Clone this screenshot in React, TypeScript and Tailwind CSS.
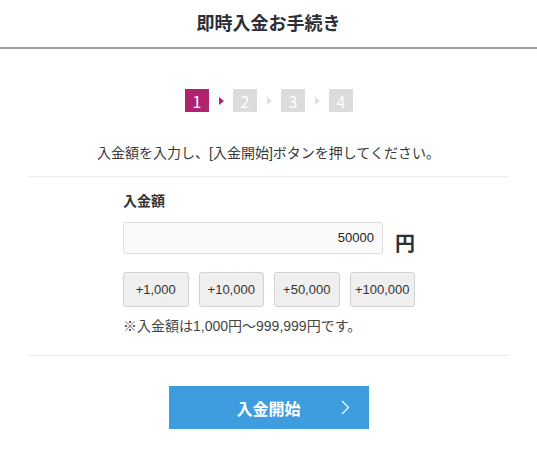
import React from "react";

const font = { fontFamily: '"Noto Sans CJK JP", "Liberation Sans", sans-serif' };
const mixed = { fontFamily: '"Liberation Sans", "Noto Sans CJK JP", sans-serif' };

const steps = [1, 2, 3, 4];
const amounts = ["+1,000", "+10,000", "+50,000", "+100,000"];

const Step = ({ n, active }: { n: number; active: boolean }) => (
  <div
    className={`flex h-[23px] w-[24px] items-center justify-center text-[16px] leading-none text-white ${
      active ? "bg-[#b0246f]" : "bg-[#dcdcdc]"
    }`}
  >
    {n}
  </div>
);

const Arrow = ({ active }: { active: boolean }) => (
  <div className="flex w-[24px] justify-center">
    <div
      className={`h-0 w-0 border-y-[4.5px] border-l-[5px] border-y-transparent ${
        active ? "border-l-[#b0246f]" : "border-l-[#e0e0e0]"
      }`}
    />
  </div>
);

export default function App() {
  return (
    <div className="min-h-[452px] w-[537px] bg-white text-[#333]" style={font}>
      {/* header */}
      <div className="flex h-[49px] items-center justify-center border-b-2 border-[#9c9c9c] pb-[2px]">
        <h1 className="text-[18px] font-bold text-[#2b2f36]">即時入金お手続き</h1>
      </div>

      {/* steps */}
      <div className="mt-[40px] flex items-center justify-center pl-[1px]">
        {steps.map((s, i) => (
          <React.Fragment key={s}>
            {i > 0 && <Arrow active={i === 1} />}
            <Step n={s} active={i === 0} />
          </React.Fragment>
        ))}
      </div>

      <p className="mt-[31px] text-center text-[14px] leading-[20px] text-[#3a3a3a]" style={mixed}>
        入金額を入力し、[入金開始]ボタンを押してください。
      </p>

      <div className="mx-[28px] mt-[13px] border-t border-[#ececec]" />

      {/* form */}
      <div className="mx-auto mt-[13px] w-[293px] pl-[1px]">
        <div className="text-[14px] font-bold leading-[20px] text-[#333]">入金額</div>
        <div className="mt-[12px] flex items-end gap-[12px]">
          <div
            className="flex h-[32px] w-[263px] items-center justify-end rounded-[3px] border border-[#dedede] bg-[#fafafa] pr-[8px] text-[13px] text-[#222]"
            style={mixed}
          >
            50000
          </div>
          <span className="mb-[1px] text-[20px] font-bold leading-none text-[#2b2f36]">円</span>
        </div>
        <div className="mt-[18px] flex gap-[10px]">
          {amounts.map((a) => (
            <button
              key={a}
              className="flex h-[35px] w-[66px] items-center justify-center whitespace-nowrap rounded-[3px] border border-[#d2d2d2] bg-[#efefef] text-[13px] text-[#333]"
              style={mixed}
            >
              {a}
            </button>
          ))}
        </div>
        <p className="mt-[9px] text-[14px] leading-[20px] text-[#444]" style={mixed}>
          ※入金額は1,000円～999,999円です。
        </p>
      </div>

      <div className="mx-[28px] mt-[19px] border-t border-[#ececec]" />

      {/* submit */}
      <div className="mt-[30px] flex justify-center">
        <button className="relative flex h-[43px] w-[200px] items-center justify-center bg-[#3d9ddf] text-[16px] font-bold text-white">
          入金開始
          <svg
            className="absolute left-[172px] top-[14px]"
            width="9"
            height="15"
            viewBox="0 0 9 15"
            fill="none"
            stroke="white"
            strokeWidth="1.2"
          >
            <path d="M1 1 L7.5 7.5 L1 14" />
          </svg>
        </button>
      </div>
    </div>
  );
}
